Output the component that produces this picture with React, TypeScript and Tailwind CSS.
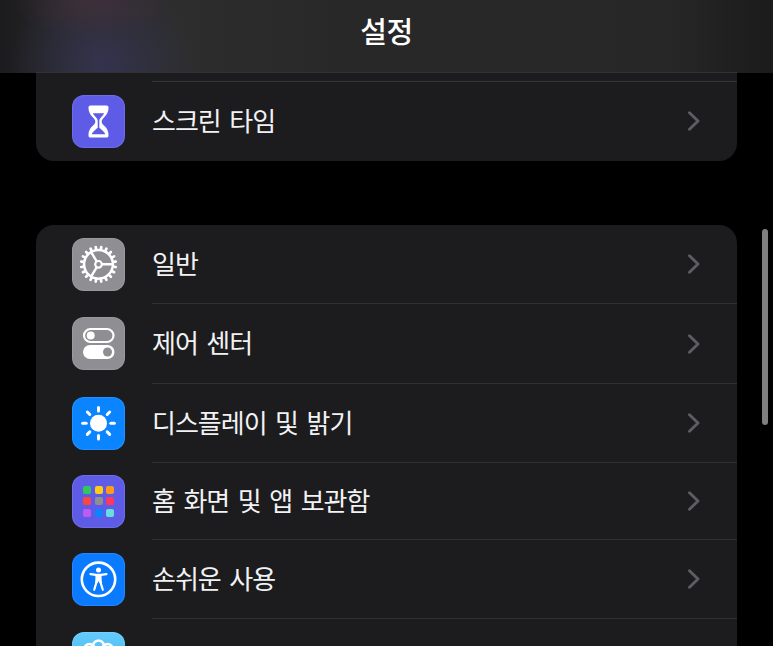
import type { ReactNode } from "react";
import { clsx } from "clsx";

function HourglassIcon() {
  return (
    <svg viewBox="0 0 53 53" className="size-full" aria-hidden="true">
      <path
        d="M18.500 10.500h16c1.300 0 2 .8 2 2.100 0 4.900-2 7.400-4.500 9.800-1.700 1.700-2.300 2.700-2.300 4.100s.6 2.400 2.300 4.100c2.500 2.400 4.500 4.900 4.500 9.800 0 1.300-.7 2.100-2 2.100h-16c-1.300 0-2-.8-2-2.100 0-4.900 2-7.400 4.500-9.800 1.700-1.700 2.300-2.700 2.300-4.100s-.6-2.400-2.300-4.100c-2.500-2.400-4.500-4.900-4.500-9.800 0-1.300.7-2.100 2-2.100z"
        fill="#fff"
      />
      <path
        d="M20.800 18.300h11.400c-.7 1.300-1.500 2.200-2.400 3.100-1.700 1.700-2.500 3-2.500 4.600v6.700c1.200 1.300 4.500 3.200 5.600 5.600.3.700 0 1-.6 1H20.700c-.6 0-.9-.3-.6-1 1.100-2.400 4.400-4.300 5.600-5.600V26c0-1.600-.8-2.900-2.500-4.600-.9-.9-1.700-1.800-2.400-3.100z"
        fill="#5e5ce6"
      />
    </svg>
  );
}

const teeth = Array.from({ length: 20 }, (_, i) => i * 18 + 9);

function GearIcon() {
  return (
    <svg viewBox="0 0 53 53" className="size-full" fill="none" stroke="#fff" aria-hidden="true">
      <circle cx="26.500" cy="26.300" r="14.400" strokeWidth="2.500" />
      {teeth.map((angle) => (
        <path
          key={angle}
          d="M26.500 11V8.800"
          strokeWidth="2.700"
          strokeLinecap="round"
          transform={`rotate(${angle} 26.500 26.300)`}
        />
      ))}
      <circle cx="26.500" cy="26.300" r="3.300" strokeWidth="2.200" />
      <path d="M30 26.300h11M24.700 23.300l-6-9.900M24.700 29.300l-6 9.900" strokeWidth="2.400" />
    </svg>
  );
}

function TogglesIcon() {
  return (
    <svg viewBox="0 0 53 53" className="size-full" aria-hidden="true">
      <rect x="12" y="12" width="29.500" height="13" rx="6.500" fill="none" stroke="#fff" strokeWidth="2.200" />
      <circle cx="18.700" cy="18.500" r="4" fill="#fff" />
      <rect x="11" y="28" width="31.500" height="14" rx="7" fill="#fff" />
      <circle cx="35.500" cy="35" r="4.500" fill="#8e8e93" />
    </svg>
  );
}

const rays = [0, 45, 90, 135, 180, 225, 270, 315];

function SunIcon() {
  return (
    <svg viewBox="0 0 53 53" className="size-full" aria-hidden="true">
      <circle cx="26.500" cy="26.200" r="8.500" fill="#fff" />
      {rays.map((angle) => (
        <path
          key={angle}
          d="M26.500 13.900V10.400"
          stroke="#fff"
          strokeWidth="3"
          strokeLinecap="round"
          transform={`rotate(${angle} 26.500 26.200)`}
        />
      ))}
    </svg>
  );
}

const tiles = [
  "bg-[#30c85a]",
  "bg-[#ffcc18]",
  "bg-[#ff9b1c]",
  "bg-[#fb4640]",
  "bg-[#8e8e93]",
  "bg-[#fb385f]",
  "bg-[#bf5af2]",
  "bg-[#0a84ff]",
  "bg-[#66e0df]",
];

function HomeScreenIcon() {
  return (
    <div className="grid size-full grid-cols-[repeat(3,8px)] grid-rows-[repeat(3,8px)] place-content-center gap-[3.500px]">
      {tiles.map((tile) => (
        <span key={tile} className={clsx("rounded-[2px]", tile)} />
      ))}
    </div>
  );
}

function AccessibilityIcon() {
  return (
    <svg viewBox="0 0 53 53" className="size-full" aria-hidden="true">
      <circle cx="26.500" cy="26.300" r="16.700" fill="none" stroke="#fff" strokeWidth="2.600" />
      <circle cx="26.500" cy="17" r="2.500" fill="#fff" />
      <path
        d="M18.500 21.100l5.700.8h4.600l5.700-.8M24.800 28.300l-2.600 8.500M28.200 28.300l2.600 8.500"
        fill="none"
        stroke="#fff"
        strokeWidth="2.200"
        strokeLinecap="round"
      />
      <path d="M23.400 21h6.200v5.300l.4 4h-2.200l-1.300-2-1.300 2H23l.4-4z" fill="#fff" />
    </svg>
  );
}

const petals = [0, 45, 90, 135, 180, 225, 270, 315];

function FlowerIcon() {
  return (
    <svg viewBox="0 0 53 53" className="size-full" fill="none" stroke="#fff" aria-hidden="true">
      {petals.map((angle) => (
        <path
          key={angle}
          d="M21.300 15.700a5.500 5.500 0 1 1 10.400 0"
          strokeWidth="2.500"
          transform={`rotate(${angle} 26.500 26.500)`}
        />
      ))}
    </svg>
  );
}

function Chevron() {
  return (
    <svg viewBox="0 0 12 20" className="h-5 w-3 shrink-0" fill="none" aria-hidden="true">
      <path d="M1.500 1.800L10 10l-8.500 8.200" stroke="#5e5e62" strokeWidth="2.900" strokeLinecap="round" strokeLinejoin="round" />
    </svg>
  );
}

type RowProps = {
  icon: ReactNode;
  iconClass: string;
  label?: string;
  className: string;
  labelClass?: string;
  divider?: boolean;
};

function Row({ icon, iconClass, label, className, labelClass, divider = true }: RowProps) {
  return (
    <li className={clsx("flex shrink-0 pl-9", className)}>
      <div className={clsx("flex w-20 shrink-0 items-center", divider ? "pb-px" : "pt-px")}>
        <span className={clsx("size-[53px] overflow-hidden rounded-xl ring-1 ring-white/10 ring-inset", iconClass)}>
          {icon}
        </span>
      </div>
      {label && (
        <div
          className={clsx(
            "flex min-w-0 flex-1 items-center justify-between pr-[37px]",
            divider && "border-b border-[#313133]",
          )}
        >
          <span
            className={clsx(
              "pb-[3px] text-[26px] leading-none tracking-[-1px] whitespace-nowrap text-[#f2f2f4] [word-spacing:3.700px]",
              labelClass,
            )}
          >
            {label}
          </span>
          <Chevron />
        </div>
      )}
    </li>
  );
}

export default function App() {
  return (
    <div className="relative flex h-[646px] w-[773px] flex-col overflow-hidden bg-black font-['Noto_Sans_CJK_KR',sans-serif]">
      <header className="flex h-[73px] shrink-0 justify-center bg-[radial-gradient(ellipse_80px_40px_at_94px_0px,#42303acc,#42303a66_50%,transparent),radial-gradient(ellipse_95px_90px_at_103px_64px,#34334e,#34334e80_45%,transparent),linear-gradient(90deg,#1c1c1e_0px,#1f1f21_20px,#2a2a2d_80px,#2d2d2d_180px,#282828_350px,#272727_670px,#1f1f20_735px,#1b1b1b_773px)]">
        <h1 className="pt-[15px] text-[29px] leading-[30px] font-medium tracking-[-0.500px] text-white">설정</h1>
      </header>

      <main className="mr-9 ml-9 flex flex-1 flex-col">
        {/* 스크롤되어 헤더 아래로 일부 가려진 그룹 */}
        <ul className="-mt-px flex h-[89px] shrink-0 flex-col rounded-b-[18px] border-t border-[#333334] bg-[#1c1c1e]">
          <li className="ml-[116px] h-[9px] shrink-0 border-b border-[#343436]" />
          <Row icon={<HourglassIcon />} iconClass="bg-[#5e5ce6]" label="스크린 타임" className="h-[78px]" divider={false} />
        </ul>

        <ul className="mt-16 flex h-[421px] shrink-0 flex-col overflow-hidden rounded-t-[18px] bg-[#1c1c1e]">
          <Row icon={<GearIcon />} iconClass="bg-[#8e8e93]" label="일반" className="h-[79px]" />
          <Row icon={<TogglesIcon />} iconClass="bg-[#8e8e93]" label="제어 센터" className="h-20" />
          <Row icon={<SunIcon />} iconClass="bg-[#0a84ff]" label="디스플레이 및 밝기" className="h-[79px]" />
          <Row
            icon={<HomeScreenIcon />}
            iconClass="bg-[#5e5ce6]"
            label="홈 화면 및 앱 보관함"
            className="h-[77px]"
          />
          <Row icon={<AccessibilityIcon />} iconClass="bg-[#0a7aff]" label="손쉬운 사용" className="h-[79px]" />
          <Row
            icon={<FlowerIcon />}
            iconClass="bg-linear-to-b from-[#64ccfb] to-[#32ade6]"
            className="h-[79px]"
          />
        </ul>
      </main>

      <div className="absolute top-[229px] right-[5px] h-[196px] w-[6px] rounded-full bg-[#7f7f7f]" />
    </div>
  );
}
